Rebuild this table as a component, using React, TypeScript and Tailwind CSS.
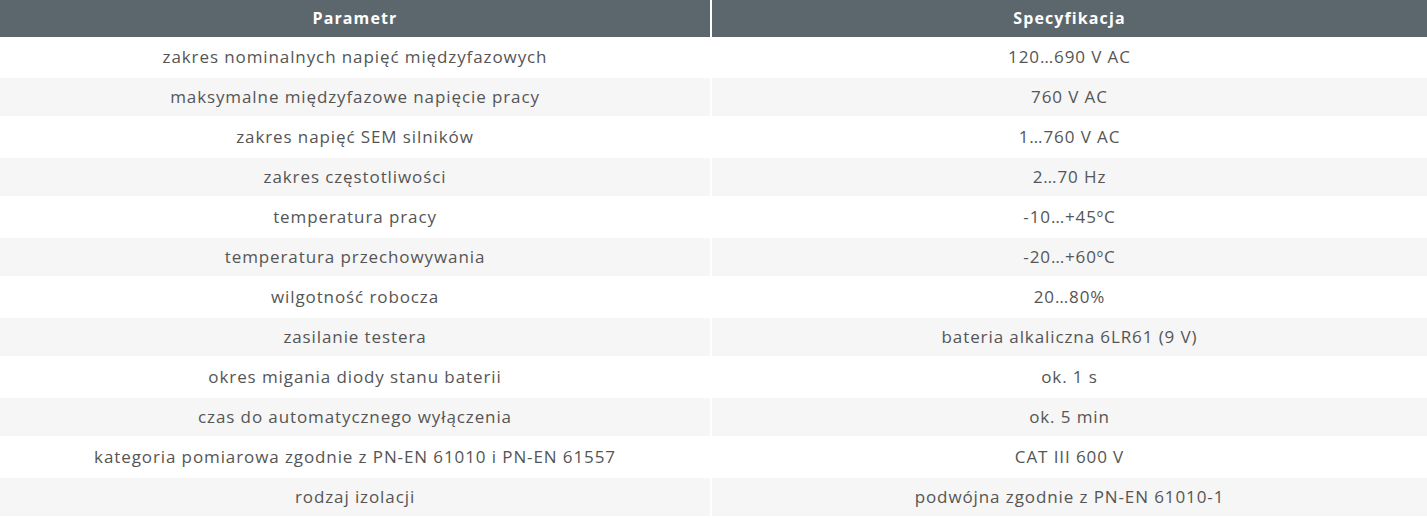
import React from "react";

const rows: [string, string][] = [
  ["zakres nominalnych napięć międzyfazowych", "120…690 V AC"],
  ["maksymalne międzyfazowe napięcie pracy", "760 V AC"],
  ["zakres napięć SEM silników", "1…760 V AC"],
  ["zakres częstotliwości", "2…70 Hz"],
  ["temperatura pracy", "-10…+45ºC"],
  ["temperatura przechowywania", "-20…+60ºC"],
  ["wilgotność robocza", "20…80%"],
  ["zasilanie testera", "bateria alkaliczna 6LR61 (9 V)"],
  ["okres migania diody stanu baterii", "ok. 1 s"],
  ["czas do automatycznego wyłączenia", "ok. 5 min"],
  ["kategoria pomiarowa zgodnie z PN-EN 61010 i PN-EN 61557", "CAT III 600 V"],
  ["rodzaj izolacji", "podwójna zgodnie z PN-EN 61010-1"],
];

export default function App() {
  return (
    <div
      className="w-[1427px] h-[518px] bg-white text-[#555555] overflow-hidden"
      style={{ fontFamily: '"Open Sans", "Liberation Sans", sans-serif' }}
    >
      <div className="flex h-[37px] bg-[#5c666d] text-white font-bold text-[16px] tracking-[1.1px]">
        <div className="w-[712px] border-r-2 border-white flex items-center justify-center pb-[2px]">
          Parametr
        </div>
        <div className="flex-1 flex items-center justify-center pb-[2px]">
          Specyfikacja
        </div>
      </div>
      {rows.map(([a, b], i) => (
        <div
          key={i}
          className={
            "flex h-[40px] border-y border-white text-[17px] tracking-[0.9px] " +
            (i % 2 === 1 ? "bg-[#f6f6f6]" : "bg-white")
          }
        >
          <div className="w-[712px] border-r-2 border-white flex items-center justify-center">
            {a}
          </div>
          <div className="flex-1 flex items-center justify-center">{b}</div>
        </div>
      ))}
    </div>
  );
}
